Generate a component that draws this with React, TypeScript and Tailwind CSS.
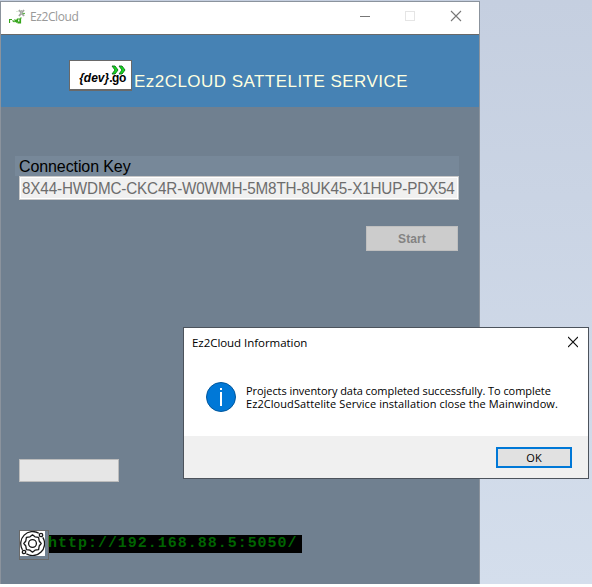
import React from "react";

function TitleIcon() {
  return (
    <svg width="17" height="17" viewBox="0 0 17 17" fill="none">
      <path d="M10 1l5 6M15 1l-5 6" stroke="#a3a6a3" strokeWidth="1.9" />
      <path d="M12.500 1v5" stroke="#b5b8b5" />
      <path d="M7 2.500h3" stroke="#dcecd8" />
      <path d="M13.500 4.500h2.500" stroke="#5fb34b" strokeWidth="1.2" />
      <path d="M.5 14v-3.500h2.500M3.500 11.500l2 1.500M6 13l2-2.500M5.500 10.500l2.500 3M8.500 10h2.500v3h-2.500zM11.500 9v5H8.500M11 9.500l1.500-.8" stroke="#36a51c" strokeWidth="1.2" />
    </svg>
  );
}

function DevGoLogo() {
  return (
    <div className="relative mt-[25px] h-[31px] w-[63px] shrink-0 border border-b-2 border-[#696969] bg-white font-['Liberation_Sans',sans-serif] text-[13px] leading-[15px] text-black">
      <div className="flex origin-left scale-x-[0.92] pl-[10px] pt-[9px] whitespace-nowrap">
        <span className="font-bold italic">{"{dev}"}</span>
        <span className="font-bold tracking-[-0.4px]">.go</span>
      </div>
      <svg className="absolute left-[41px] top-[4px]" width="15" height="10" viewBox="0 0 15 10">
        <path d="M1 1h3l3 4-3 4H1l3-4zM8 1h3l3 4-3 4H8l3-4z" fill="#18dd21" stroke="#087017" strokeWidth="0.9" />
      </svg>
    </div>
  );
}

function GearIcon() {
  return (
    <div className="h-[30px] w-[30px] shrink-0 border border-[#696969]">
      <svg className="bg-white" width="25" height="25" viewBox="0 0 25 25" fill="none" stroke="#171717" strokeWidth="1.3">
        <path d="M18.800 2.200A12 12 0 0 0 2.500 18.800M22.800 6.300A12 12 0 0 1 6.300 22.800" />
        <path d="M12.500 3.800L15 5.800L18.600 6.400L19.200 10L21.200 12.500L19.200 15L18.600 18.600L15 19.200L12.500 21.200L10 19.200L6.400 18.600L5.800 15L3.800 12.500L5.800 10L6.400 6.400L10 5.800Z" strokeLinejoin="round" />
        <circle cx="12.500" cy="12.500" r="3.900" />
        <circle cx="21" cy="4" r="1.700" />
        <circle cx="4" cy="21" r="1.700" />
      </svg>
    </div>
  );
}

function MainWindow() {
  return (
    <section className="absolute left-0 top-[1px] flex h-[583px] w-[480px] flex-col border border-b-0 border-[#8b939d] bg-[#708090]">
      <header className="flex h-[33px] shrink-0 border-b border-[#696969] bg-white">
        <div className="w-[28px] shrink-0 pl-[8px] pt-[7px]"><TitleIcon /></div>
        <span className="w-[331px] shrink-0 pl-[1px] pt-[6px] font-['Open_Sans',sans-serif] text-[12px] leading-[17px] tracking-[-0.4px] text-[#999]">Ez2Cloud</span>
        <svg className="shrink-0" width="118" height="32" viewBox="0 0 118 32" fill="none">
          <path d="M0 14.500h10" stroke="#777" />
          <rect x="45.500" y="9.500" width="9" height="9" stroke="#e5e5e5" />
          <path d="M91 9l10 10M101 9L91 19" stroke="#777" strokeWidth="1.1" />
        </svg>
      </header>
      <div className="flex h-[72px] shrink-0 bg-[#4682b4] pl-[68px]">
        <DevGoLogo />
        <h1 className="pl-[2px] pt-[37px] font-['Liberation_Sans',sans-serif] text-[17px] leading-[20px] tracking-[0.46px] whitespace-nowrap text-[#ffffe0]">Ez2CLOUD SATTELITE SERVICE</h1>
      </div>
      <div className="mt-[49px] ml-[14px] h-[20px] w-[444px] shrink-0 bg-[#778899] pl-[4px] font-['Liberation_Sans',sans-serif] text-[16px] leading-[21px] tracking-[-0.1px] text-black">Connection Key</div>
      <div className="ml-[18px] h-[24px] w-[440px] shrink-0 border border-[#c8c8c8] bg-[#f0f0f0] pl-[2px] shadow-[inset_0_0_0_1px_white] font-['Liberation_Sans',sans-serif] text-[16px] leading-[23px] text-[#6d6d6d]">
        <span className="block w-max origin-left scale-x-[0.952] tracking-[-0.15px] whitespace-nowrap">8X44-HWDMC-CKC4R-W0WMH-5M8TH-8UK45-X1HUP-PDX54</span>
      </div>
      <button className="mt-[26px] ml-[365px] h-[25px] w-[92px] shrink-0 border border-[#bfbfbf] bg-[#cccccc] font-['Liberation_Sans',sans-serif] text-[12px] font-bold tracking-[0.1px] text-[#838383]">Start</button>
      <div className="mt-[208px] ml-[18px] h-[23px] w-[100px] shrink-0 border border-[#bcbcbc] bg-[#e6e6e6]" />
      <div className="mt-[48px] ml-[18px] flex">
        <GearIcon />
        <span className="mt-[5px] h-[18px] w-[253px] bg-black font-['Liberation_Mono',monospace] text-[15px] leading-[17px] whitespace-nowrap text-[#006400]">
          <span className="-ml-[1px] inline-block font-bold tracking-[0.98px]">http://192.168.88.5:5050/</span>
        </span>
      </div>
    </section>
  );
}

function InformationDialog() {
  return (
    <section className="absolute left-[183px] top-[327px] flex h-[152px] w-[406px] flex-col border border-[#4c535c] bg-white font-['Open_Sans',sans-serif] text-[11.5px] text-black">
      <header className="flex h-[29px] justify-between pl-[8px] pr-[10px] pt-[7px]">
        <span className="leading-[16px] tracking-[-0.05px]">Ez2Cloud Information</span>
        <svg width="10" height="14" viewBox="0 0 10 14"><path d="M0 2l10 10M10 2L0 12" stroke="#111" strokeWidth="1.1" /></svg>
      </header>
      <div className="flex h-[79px] shrink-0 pl-[22px] pt-[25px]">
        <svg className="shrink-0" width="30" height="30" viewBox="0 0 30 30">
          <circle cx="15" cy="15" r="14.500" fill="#0078d7" stroke="#00579d" />
          <path d="M15 10v14" stroke="white" strokeWidth="2" />
          <path d="M14 7h2" stroke="white" strokeWidth="2" />
        </svg>
        <div className="pl-[10px] pt-[2px] text-[11px] leading-[13px] whitespace-nowrap">
          <p className="tracking-[-0.06px]">Projects inventory data completed successfully. To complete</p>
          <p className="tracking-[0.07px]">Ez2CloudSattelite Service installation close the Mainwindow.</p>
        </div>
      </div>
      <footer className="flex flex-1 justify-end bg-[#f0f0f0] pr-[16px] pt-[11px]">
        <button className="h-[21px] w-[76px] border-2 border-[#0078d7] bg-[#e1e1e1] text-[11px] leading-[17px]">OK</button>
      </footer>
    </section>
  );
}

export default function App() {
  return (
    <main className="relative h-[587px] w-[592px] overflow-hidden bg-white">
      <div className="h-[584px] bg-linear-to-b from-[#c5cfe0] to-[#d4deec]" />
      <MainWindow />
      <InformationDialog />
    </main>
  );
}
